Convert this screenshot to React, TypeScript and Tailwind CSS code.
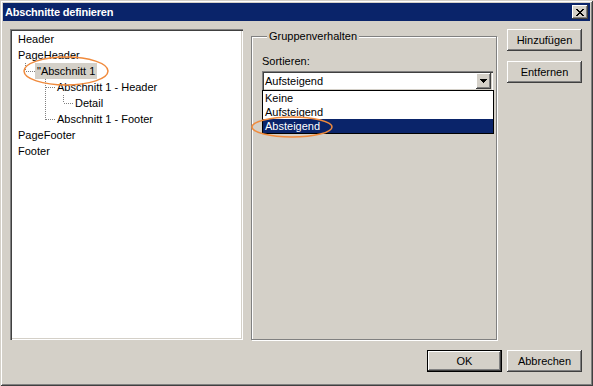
import React from 'react';

const raised =
  'shadow-[inset_-1px_-1px_0_#404040,inset_1px_1px_0_#fff,inset_-2px_-2px_0_#808080,inset_2px_2px_0_#d4d0c8]';
const sunken =
  'shadow-[inset_1px_1px_0_#808080,inset_2px_2px_0_#404040,inset_-1px_-1px_0_#fff,inset_-2px_-2px_0_#d4d0c8]';

const tree = [
  { label: 'Header', indent: 8 },
  { label: 'PageHeader', indent: 8 },
  { label: '"Abschnitt 1', indent: 25, selected: true },
  { label: 'Abschnitt 1 - Header', indent: 47 },
  { label: 'Detail', indent: 65 },
  { label: 'Abschnitt 1 - Footer', indent: 47 },
  { label: 'PageFooter', indent: 8 },
  { label: 'Footer', indent: 8 },
];

function Button({ children, isDefault = false }: { children: React.ReactNode; isDefault?: boolean }) {
  if (isDefault) {
    return (
      <div className="w-[75px] h-[22px] border border-black">
        <div className={`w-full h-full flex items-center justify-center ${raised}`}>{children}</div>
      </div>
    );
  }
  return (
    <div className={`w-[75px] h-[22px] flex items-center justify-center ${raised}`}>{children}</div>
  );
}

export default function App() {
  return (
    <div
      className="relative w-[593px] h-[386px] bg-[#d4d0c8] p-[3px] flex flex-col text-[11px] text-black shadow-[inset_1px_1px_0_#d4d0c8,inset_-1px_-1px_0_#404040,inset_2px_2px_0_#fff,inset_-2px_-2px_0_#808080]"
      style={{ fontFamily: '"Liberation Sans", Arial, sans-serif' }}
    >
      {/* title bar */}
      <div className="h-[18px] bg-[#0a246a] flex items-center justify-between pl-[2px] pr-[2px]">
        <span className="text-white font-bold text-[11px] tracking-[-0.2px]">Abschnitte definieren</span>
        <div className={`w-[16px] h-[14px] bg-[#d4d0c8] flex items-center justify-center ${raised}`}>
          <svg width="8" height="7" viewBox="0 0 8 7" shapeRendering="crispEdges">
            <path
              d="M0 0h2v1h-2zM6 0h2v1h-2zM1 1h2v1h-2zM5 1h2v1h-2zM2 2h4v1h-4zM3 3h2v1h-2zM2 4h4v1h-4zM1 5h2v1h-2zM5 5h2v1h-2zM0 6h2v1h-2zM6 6h2v1h-2z"
              fill="#000"
            />
          </svg>
        </div>
      </div>

      <div className="flex-1 flex flex-col pt-[8px] pl-[7px] pr-[8px]">
        <div className="flex h-[311px]">
          {/* tree */}
          <div className={`relative w-[233px] h-full bg-white pt-[2px] ${sunken}`}>
            <svg className="absolute inset-0" width="233" height="311" shapeRendering="crispEdges">
              <g stroke="#808080" strokeWidth="1" strokeDasharray="1 1" fill="none">
                <path d="M15.5 34v8" />
                <path d="M16 42.5h9" />
                <path d="M35.5 50v41" />
                <path d="M36 58.5h9" />
                <path d="M36 90.5h9" />
                <path d="M53.5 66v8" />
                <path d="M54 74.5h9" />
              </g>
            </svg>
            {tree.map((row) => (
              <div key={row.label} className="relative h-[16px] leading-[16px]" style={{ paddingLeft: row.indent }}>
                <span className={row.selected ? 'bg-[#d4d0c8] px-[2px] inline-block h-[16px]' : ''}>{row.label}</span>
              </div>
            ))}
          </div>

          {/* group box */}
          <fieldset className="ml-[8px] w-[246px] h-full border border-[#808080] shadow-[inset_1px_1px_0_#fff,1px_1px_0_#fff] pl-[10px] pr-[3px] m-0">
            <legend className="ml-[5px] px-[2px] leading-[14px] bg-[#d4d0c8]">Gruppenverhalten</legend>
            <div className="mt-[10px] leading-[16px]">Sortieren:</div>
            <div className={`relative mt-[2px] h-[20px] bg-white flex items-center pl-[3px] pr-[2px] ${sunken}`}>
              <span className="flex-1 leading-[16px]">Aufsteigend</span>
              <div className={`w-[15px] h-[16px] bg-[#d4d0c8] flex items-center justify-center ${raised}`}>
                <svg width="7" height="4" viewBox="0 0 7 4" shapeRendering="crispEdges">
                  <path d="M0 0h7v1h-7zM1 1h5v1h-5zM2 2h3v1h-3zM3 3h1v1h-1z" fill="#000" />
                </svg>
              </div>
              <div className="absolute left-0 top-[19px] w-[232px] bg-white border border-black">
                <div className="h-[14px] leading-[14px] pl-[2px]">Keine</div>
                <div className="h-[14px] leading-[14px] pl-[2px]">Aufsteigend</div>
                <div className="h-[14px] leading-[14px] pl-[2px] bg-[#0a246a] text-white">Absteigend</div>
              </div>
            </div>
          </fieldset>

          {/* side buttons */}
          <div className="ml-[10px] flex flex-col gap-[10px]">
            <Button>Hinzufügen</Button>
            <Button>Entfernen</Button>
          </div>
        </div>

        <div className="mt-[10px] flex justify-end gap-[5px]">
          <Button isDefault>OK</Button>
          <Button>Abbrechen</Button>
        </div>
      </div>

      {/* annotation ellipses */}
      <svg className="absolute inset-0 pointer-events-none" width="593" height="386">
        <ellipse cx="66" cy="71" rx="42" ry="14" fill="none" stroke="#f08a3c" strokeWidth="1.5" />
        <ellipse cx="292" cy="127" rx="40" ry="10" fill="none" stroke="#f08a3c" strokeWidth="1.5" />
      </svg>
    </div>
  );
}
